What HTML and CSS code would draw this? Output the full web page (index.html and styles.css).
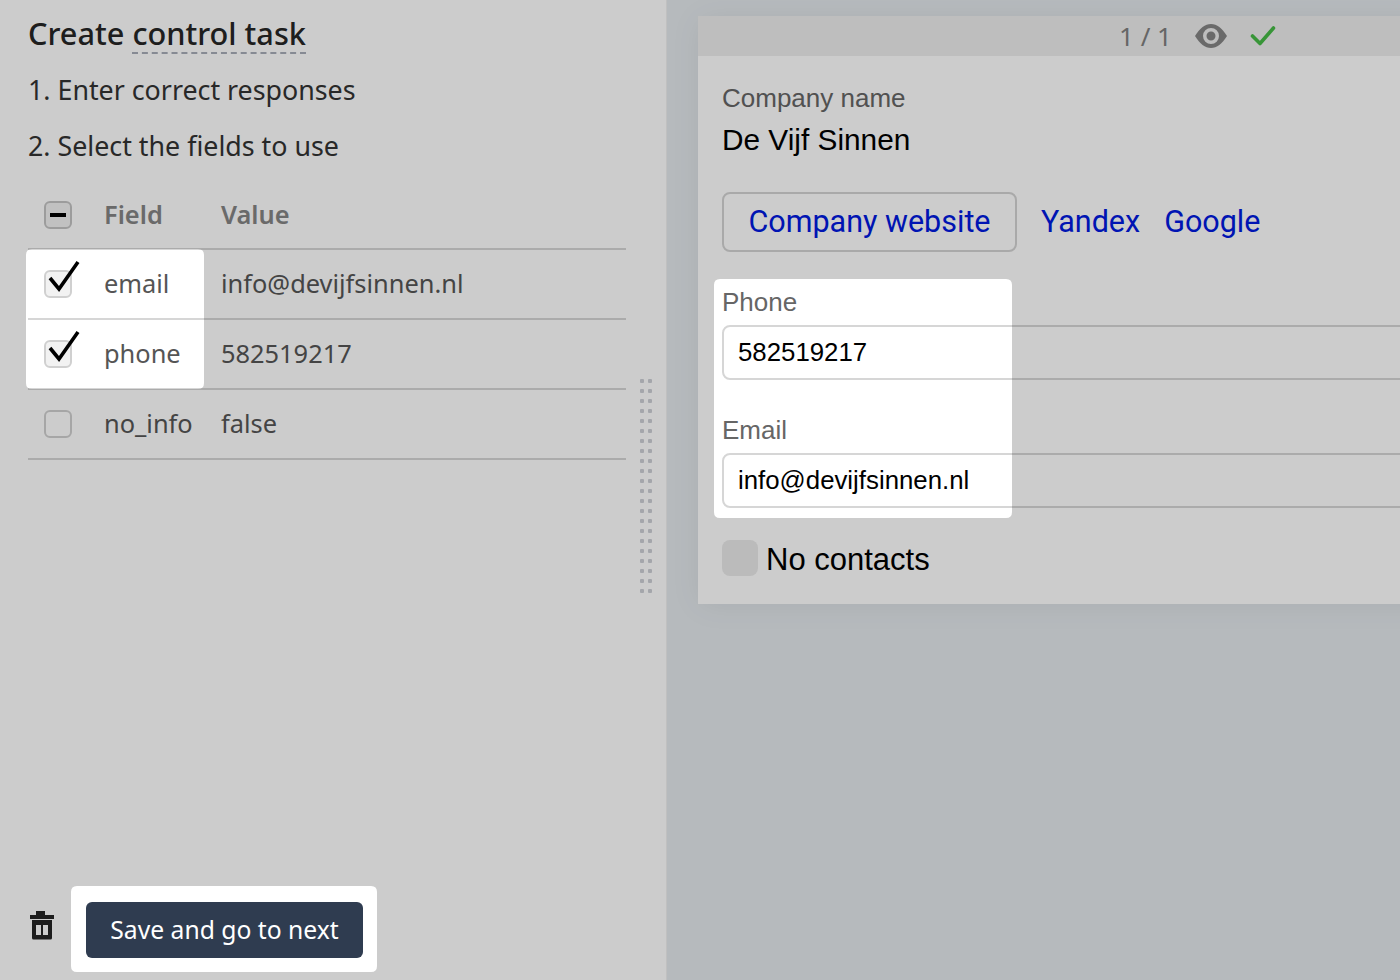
FILE: index.html
```html
<!DOCTYPE html>
<html lang="en">
<head>
    <meta charset="UTF-8">
    <title>Create control task</title>
    <link rel="stylesheet" href="styles.css">
</head>
<body>
    <div class="page">
        <div class="left">
            <div class="left-content">
                <h1 class="title">Create <span class="hint">control task</span></h1>
                <p class="step">1. Enter correct responses</p>
                <p class="step">2. Select the fields to use</p>

                <div class="fields">
                    <div class="row head">
                        <div><span class="box minus"><i></i></span></div>
                        <div>Field</div>
                        <div>Value</div>
                    </div>
                    <div class="row">
                        <div>
                            <span class="box checked">
                                <svg class="tick" width="36" height="38" viewBox="0 0 36 38"><path d="M6 20 L15 31 L34 4" fill="none" stroke="#000" stroke-width="3.6"/></svg>
                            </span>
                        </div>
                        <div>email</div>
                        <div>info@devijfsinnen.nl</div>
                    </div>
                    <div class="row">
                        <div>
                            <span class="box checked">
                                <svg class="tick" width="36" height="38" viewBox="0 0 36 38"><path d="M6 20 L15 31 L34 4" fill="none" stroke="#000" stroke-width="3.6"/></svg>
                            </span>
                        </div>
                        <div>phone</div>
                        <div>582519217</div>
                    </div>
                    <div class="row">
                        <div><span class="box"></span></div>
                        <div>no_info</div>
                        <div>false</div>
                    </div>
                </div>

                <div class="actions">
                    <svg class="trash" width="24" height="29" viewBox="0 0 24 29">
                        <path fill-rule="evenodd" fill="#252525" d="M6 0 H15 V4 H24 V8 H0 V4 H6 Z M2 9 H22 V27 Q22 28.5 20.500 28.500 H3.500 Q2 28.500 2 27 Z M6 14 V24 H11 V14 Z M13 14 V24 H18 V14 Z"/>
                    </svg>
                    <button class="save">Save and go to next</button>
                </div>
            </div>
            <div class="handle"></div>
        </div>

        <div class="right">
            <div class="card">
                <div class="card-head">
                    <span class="counter">1 / 1</span>
                    <svg width="32" height="24" viewBox="0 0 32 24">
                        <path fill-rule="evenodd" fill="#858585" d="M0 12 C5 4 10 0 16 0 C22 0 27 4 32 12 C27 20 22 24 16 24 C10 24 5 20 0 12 Z M16 4 A8 8 0 1 0 16 20 A8 8 0 1 0 16 4 Z M16 7.500 A4.500 4.500 0 1 1 16 16.500 A4.500 4.500 0 1 1 16 7.500 Z"/>
                    </svg>
                    <svg class="done" width="26" height="22" viewBox="0 0 26 22">
                        <path d="M2.500 11 L10 18.500 L23.500 3" fill="none" stroke="#46bb46" stroke-width="3.6" stroke-linecap="round" stroke-linejoin="round"/>
                    </svg>
                </div>
                <div class="card-body">
                    <div class="label">Company name</div>
                    <div class="company">De Vijf Sinnen</div>

                    <div class="links">
                        <a class="link-btn">Company website</a>
                        <a class="link">Yandex</a>
                        <a class="link">Google</a>
                    </div>

                    <div class="label field-label">Phone</div>
                    <div class="input">582519217</div>

                    <div class="label field-label">Email</div>
                    <div class="input">info@devijfsinnen.nl</div>

                    <div class="no-contacts">
                        <span class="square"></span>
                        <span class="no-contacts-text">No contacts</span>
                    </div>
                </div>
            </div>
        </div>
    </div>

    <!-- tutorial overlay, the holes are the highlighted parts -->
    <svg class="overlay" width="1400" height="980" viewBox="0 0 1400 980">
        <path fill="rgba(0,0,0,0.2)" fill-rule="evenodd" d="M0 0 H1400 V980 H0 Z
            M32 249 H198 Q204 249 204 255 V383 Q204 389 198 389 H32 Q26 389 26 383 V255 Q26 249 32 249 Z
            M720 279 H1006 Q1012 279 1012 285 V512 Q1012 518 1006 518 H720 Q714 518 714 512 V285 Q714 279 720 279 Z
            M77 886 H371 Q377 886 377 892 V966 Q377 972 371 972 H77 Q71 972 71 966 V892 Q71 886 77 886 Z"/>
    </svg>
</body>
</html>
```

FILE: styles.css
```css
* {
    box-sizing: border-box;
}

body {
    margin: 0;
    height: 100vh;
    overflow: hidden;
    background: #fff;
    font-family: "Noto Sans", sans-serif;
}

.page {
    display: flex;
    height: 980px;
}

/* left side */
.left {
    width: 667px;
    flex-shrink: 0;
    display: flex;
    background: #fff;
    border-right: 1px solid #f0f0f0;
}

.left-content {
    width: 598px;
    margin-left: 28px;
    display: flex;
    flex-direction: column;
}

.title {
    margin: 14px 0 16px;
    font-size: 30.700px;
    line-height: 38px;
    font-weight: 500;
    color: #262626;
}

.hint {
    display: inline-block;
    border-bottom: 2px dashed #a8adb8;
}

.step {
    margin: 0 0 16px;
    font-size: 26.800px;
    line-height: 40px;
    color: #333;
}

.fields {
    font-size: 25.400px;
    color: #555;
}

.row {
    display: grid;
    grid-template-columns: 76px 117px 1fr;
    align-items: center;
    height: 70px;
    border-bottom: 2px solid #d6d6d6;
}

.row > div {
    padding-bottom: 2px;
}

.row > div:first-child {
    padding-bottom: 0;
}

.row.head {
    height: 68px;
    font-weight: 600;
    color: #858585;
}

.box {
    display: block;
    position: relative;
    width: 28px;
    height: 28px;
    margin-left: 16px;
    border: 2px solid #d0d0d0;
    border-radius: 6px;
}

.box.checked,
.box.minus {
    background: #f2f2f2;
}

.box.minus {
    border-color: #c4c4c4;
}

.box.minus i {
    display: block;
    width: 16px;
    height: 4px;
    margin: 10px 4px;
    background: #000;
}

.tick {
    position: absolute;
    left: -2px;
    top: -14px;
}

.actions {
    margin-top: auto;
    margin-bottom: 22px;
    display: flex;
    align-items: center;
    gap: 32px;
    padding-left: 2px;
}

.trash {
    margin-top: -10px;
}

.save {
    width: 277px;
    height: 56px;
    padding: 0 0 2px;
    border: none;
    border-radius: 6px;
    background: #2f3c50;
    color: #fff;
    font-family: inherit;
    font-size: 24.700px;
}

.handle {
    align-self: center;
    width: 12px;
    height: 220px;
    margin: -2px 0 0 14px;
    background-image: radial-gradient(circle at 2px 2px, #cdd0d6 2px, transparent 2.500px),
        radial-gradient(circle at 10px 2px, #cdd0d6 2px, transparent 2.500px);
    background-size: 12px 10px;
}

/* right side */
.right {
    flex: 1;
    min-width: 0;
    overflow: hidden;
    background: #e4e9ed;
    padding: 16px 0 0 31px;
}

.card {
    width: 1000px;
    height: 588px;
    background: #fff;
    box-shadow: 0 2px 30px rgba(0, 0, 0, 0.06);
}

.card-head {
    height: 40px;
    display: flex;
    align-items: center;
    justify-content: center;
    gap: 24px;
    background: #eeeeee;
    padding-right: 1px;
}

.counter {
    font-size: 26px;
    color: #808080;
    margin-right: -1px;
}

.done {
    margin-left: -1px;
}

.card-body {
    padding: 26px 24px;
}

.label {
    font-family: "Liberation Sans", sans-serif;
    font-size: 26px;
    line-height: 32px;
    color: #666;
}

.company {
    margin-top: 6px;
    font-family: "Liberation Sans", sans-serif;
    font-size: 29.800px;
    line-height: 40px;
    color: #000;
}

.links {
    display: flex;
    align-items: center;
    gap: 24px;
    margin-top: 32px;
    font-family: "Roboto", sans-serif;
    font-size: 30.500px;
    color: #0019e0;
}

.link-btn {
    width: 295px;
    height: 60px;
    padding-bottom: 2px;
    display: flex;
    align-items: center;
    justify-content: center;
    border: 2px solid #d4d4d4;
    border-radius: 8px;
}

.link {
    margin-bottom: 2px;
}

.field-label {
    margin-top: 34px;
}

.input {
    height: 55px;
    margin-top: 7px;
    padding-left: 14px;
    border: 2px solid #d6d6d6;
    border-radius: 8px;
    font-family: "Liberation Sans", sans-serif;
    font-size: 25.800px;
    line-height: 51px;
    color: #000;
}

.no-contacts {
    display: flex;
    align-items: center;
    gap: 8px;
    margin-top: 30px;
    font-family: "Liberation Sans", sans-serif;
    font-size: 31px;
    color: #000;
}

.no-contacts-text {
    padding-top: 4px;
}

.square {
    width: 36px;
    height: 36px;
    border-radius: 8px;
    background: #eaeaea;
}

.overlay {
    position: fixed;
    left: 0;
    top: 0;
    pointer-events: none;
}
```
